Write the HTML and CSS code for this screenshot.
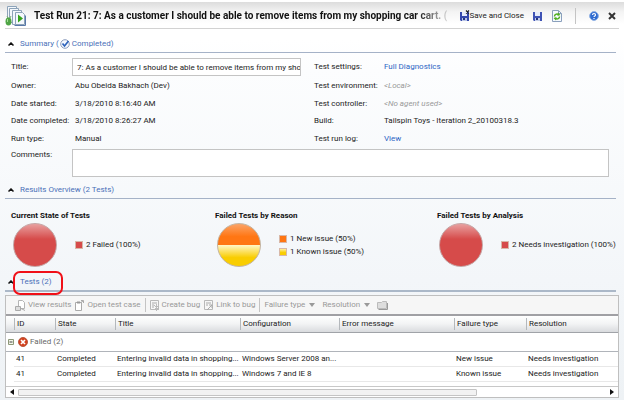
FILE: index.html
```html
<!DOCTYPE html>
<html lang="en">
<head>
<meta charset="utf-8">
<title>Test Run 21</title>
<link rel="stylesheet" href="styles.css">
</head>
<body>
<header class="titlebar">
  <svg class="run-icon" viewBox="0 0 22 22" aria-hidden="true">
    <g fill="#f4f8fc" stroke="#8da3b9"><path d="M2.500 1.500h9v14h-9z"/><path d="M4.500 3.500h9v14h-9z"/><path d="M7.500 5.500h9v14h-9z"/><path d="M10.500 7.500h7l2 2v10h-9z"/></g>
    <path d="M9.500 20.500h11v-10" fill="none" stroke="#5878a8"/>
    <path d="M13 9.500l5 4-5 4z" fill="#35a31c"/>
    <path d="M3 13l-1-2M5 13l1-2" stroke="#7fae7a"/>
    <ellipse cx="3.500" cy="16.500" rx="3" ry="4" fill="#4fa545"/><path d="M2.500 14v3" stroke="#a5dc98"/>
  </svg>
  <h1>Test Run 21: 7: As a customer I should be able to remove items from my shopping car cart. (</h1>
  <div class="actions">
    <button class="save-close" type="button">
      <svg width="11" height="11" viewBox="0 0 11 11" aria-hidden="true"><path d="M1 2h9v9H2l-1-1z" fill="#3448ac"/><path d="M3 2h5v4H3z" fill="#e6ecfa"/><path d="M3 8h5v3H3z" fill="#b9c5e6"/><path d="M4 8h2v2H4z" fill="#25357f"/><path d="M7 .5l3 3M10 .5l-3 3" stroke="#222" stroke-width="1.200"/></svg>Save and Close</button>
    <button type="button" aria-label="Save"><svg width="10" height="10" viewBox="0 0 10 10"><path d="M0 1h9v9H1L0 9z" fill="#3f53b5"/><path d="M2 1h5v4H2z" fill="#e6ecfa"/><path d="M2 7h5v3H2z" fill="#c4cee9"/><path d="M3 7h2v2H3z" fill="#25357f"/></svg></button>
    <button type="button" aria-label="Refresh"><svg width="10" height="12" viewBox="0 0 10 12"><path d="M.5.5h6l3 3v8h-9z" fill="#f6faff" stroke="#8ba0bd"/><path d="M6.500.5v3h3" fill="none" stroke="#8ba0bd"/><path d="M2.500 6.500c0-2 2-3 4-2M7.500 6.500c0 2-2 3-4 2" fill="none" stroke="#4fae20" stroke-width="1.500"/><path d="M6 2.500l2.500 2.500-3 1zM4 10.500L1.500 8l3-1z" fill="#4fae20"/></svg></button>
    <span class="divider"></span>
    <button type="button" aria-label="Help"><svg width="10" height="10" viewBox="0 0 10 10"><circle cx="5" cy="5" r="4.400" fill="#2f6bd0" stroke="#8fb0e4"/><path d="M3.500 4c0-2 3-2 3 0 0 1-1.500 1-1.500 2M5 7v1" fill="none" stroke="#fff" stroke-width="1.200"/></svg></button>
    <button type="button" aria-label="Close"><svg width="8" height="8" viewBox="0 0 8 8"><path d="M1 1l6 6M7 1L1 7" stroke="#333" stroke-width="2"/></svg></button>
  </div>
</header>

<main>
  <section>
    <h2><svg class="chevron" viewBox="0 0 6 4" aria-hidden="true"><path d="M.5 3.500L3 1l2.500 2.500" fill="none" stroke="#111" stroke-width="1.500"/></svg><span>Summary (</span><svg class="check" viewBox="0 0 10 10" aria-hidden="true"><circle cx="5" cy="5" r="4.300" fill="#f4f8ff" stroke="#8c9dbd"/><path d="M2.500 4.500L4.500 7l4-5" fill="none" stroke="#2c62bb" stroke-width="1.700"/></svg><span>Completed)</span></h2>
    <form class="details">
      <label for="title">Title:</label><input id="title" value="7: As a customer I should be able to remove items from my sho">
      <span>Test settings:</span><a href="#settings">Full Diagnostics</a>
      <span>Owner:</span><span class="value">Abu Obeida Bakhach (Dev)</span>
      <span>Test environment:</span><em>&lt;Local&gt;</em>
      <span>Date started:</span><span class="value">3/18/2010 8:16:40 AM</span>
      <span>Test controller:</span><em>&lt;No agent used&gt;</em>
      <span>Date completed:</span><span class="value">3/18/2010 8:26:27 AM</span>
      <span>Build:</span><span>Tailspin Toys - Iteration 2_20100318.3</span>
      <span>Run type:</span><span class="value">Manual</span>
      <span>Test run log:</span><a href="#log">View</a>
      <label class="comments-label" for="comments">Comments:</label><textarea id="comments"></textarea>
    </form>
  </section>

  <section>
    <h2><svg class="chevron" viewBox="0 0 6 4" aria-hidden="true"><path d="M.5 3.500L3 1l2.500 2.500" fill="none" stroke="#111" stroke-width="1.500"/></svg><span>Results Overview (2 Tests)</span></h2>
    <div class="charts">
      <div class="chart">
        <h3>Current State of Tests</h3>
        <div class="plot"><div class="pie red"></div>
          <ul><li><i class="red"></i>2 Failed (100%)</li></ul></div>
      </div>
      <div class="chart">
        <h3>Failed Tests by Reason</h3>
        <div class="plot"><div class="pie split"></div>
          <ul><li><i class="orange"></i>1 New issue (50%)</li><li><i class="yellow"></i>1 Known issue (50%)</li></ul></div>
      </div>
      <div class="chart">
        <h3>Failed Tests by Analysis</h3>
        <div class="plot"><div class="pie red"></div>
          <ul><li><i class="red"></i>2 Needs investigation (100%)</li></ul></div>
      </div>
    </div>
  </section>

  <section>
    <h2 class="tests"><svg class="chevron" viewBox="0 0 6 4" aria-hidden="true"><path d="M.5 3.500L3 1l2.500 2.500" fill="none" stroke="#111" stroke-width="1.500"/></svg><span>Tests (2)</span></h2>
    <div class="panel">
      <div class="toolbar">
        <button type="button"><svg width="11" height="11" viewBox="0 0 11 11" aria-hidden="true"><path d="M3.500.5h4l2 2v6h-6z" fill="#fff" stroke="#b4b4b4"/><path d="M.5 6.500h5v4h-5zM5 8l5 2.500" fill="#ddd" stroke="#aaa"/></svg>View results</button>
        <button type="button"><svg width="10" height="11" viewBox="0 0 10 11" aria-hidden="true"><path d="M.5 2.500h6v8h-6z" fill="#fff" stroke="#aaa"/><path d="M2 2.500h3" stroke="#999" stroke-width="2"/><path d="M5 3l3-2M6 .5h2.500V3" fill="none" stroke="#aaa"/></svg>Open test case</button>
        <span class="divider"></span>
        <button type="button"><svg width="10" height="11" viewBox="0 0 10 11" aria-hidden="true"><path d="M.5.500h8v9h-8z" fill="#f6f6f6" stroke="#b8b8b8"/><path d="M2 3h5M2 5h2M2 7h2" stroke="#aaa"/><path d="M4 5l5 5M9 5l-5 5M6.500 4v7" stroke="#bbb"/></svg>Create bug</button>
        <button type="button"><svg width="10" height="11" viewBox="0 0 10 11" aria-hidden="true"><path d="M.5.500h8v9h-8z" fill="#f6f6f6" stroke="#b8b8b8"/><path d="M2 3h5M2 5h2" stroke="#aaa"/><path d="M3 10l5-5M5 5h3v3" fill="none" stroke="#aaa"/></svg>Link to bug</button>
        <span class="divider"></span>
        <button class="menu" type="button">Failure type<i class="caret"></i></button>
        <button class="menu" type="button">Resolution<i class="caret"></i></button>
        <button type="button" aria-label="Columns"><svg width="11" height="9" viewBox="0 0 11 9"><path d="M.5 1.500h4l1-1h4v7h-9z" fill="#ddd" stroke="#bbb"/><path d="M10.500 2v6.500h-9" fill="none" stroke="#999"/></svg></button>
      </div>
      <table>
        <colgroup><col class="c-exp"><col class="c-id"><col class="c-state"><col class="c-title"><col class="c-config"><col class="c-error"><col class="c-failure"><col></colgroup>
        <thead><tr><th></th><th>ID</th><th>State</th><th>Title</th><th>Configuration</th><th>Error message</th><th>Failure type</th><th>Resolution</th></tr></thead>
        <tbody>
          <tr class="group"><td colspan="8"><div><svg width="6" height="6" viewBox="0 0 6 6" aria-hidden="true"><path d="M.5.5h5v5h-5z" fill="#f3f6e9" stroke="#8d9878"/><path d="M1.500 3h3" stroke="#444"/></svg><svg width="10" height="10" viewBox="0 0 10 10" aria-hidden="true"><circle cx="5" cy="5" r="4.500" fill="#d3401d" stroke="#b95a40"/><path d="M3 3l4 4M7 3L3 7" stroke="#fff" stroke-width="1.700"/></svg>Failed (2)</div></td></tr>
          <tr><td></td><td>41</td><td>Completed</td><td>Entering invalid data in shopping...</td><td>Windows Server 2008 an...</td><td></td><td>New issue</td><td>Needs investigation</td></tr>
          <tr><td></td><td>41</td><td>Completed</td><td>Entering invalid data in shopping...</td><td>Windows 7 and IE 8</td><td></td><td>Known issue</td><td>Needs investigation</td></tr>
        </tbody>
      </table>
      <div class="scrollbar"><i class="left"></i><div class="track"><div class="thumb"></div></div><i class="right"></i></div>
    </div>
  </section>
</main>
</body>
</html>
```
FILE: styles.css
```css
*, *::before, *::after { box-sizing: border-box; }
body {
  margin: 0;
  padding: 2px 5px 2px;
  min-height: 100vh;
  font: 8px/12px Roboto, "Noto Sans", sans-serif;
  color: #222;
  background: linear-gradient(#fff 40px, #fcfdfe 70px, #f3f6f9 280px, #eef2f5);
}
h1, h2, h3, ul { margin: 0; padding: 0; font-size: inherit; }
svg { flex: none; }
button {
  display: flex;
  align-items: center;
  padding: 0;
  border: 0;
  background: none;
  font: inherit;
  color: inherit;
}
a { color: #2c66c4; text-decoration: none; }
em { color: #999; }
.divider { width: 1px; height: 14px; background: #c4c4c4; }

.titlebar {
  display: flex;
  align-items: center;
  height: 27px;
  margin: 0 -5px;
  padding: 0 8px 0 5px;
  background: linear-gradient(#dcdcdc, #f4f4f4 10px, #fff 22px);
}
.titlebar::after { content: ""; position: absolute; left: 5px; right: 5px; top: 28px; height: 1px; background: #d2d2d2; }
.run-icon { width: 22px; height: 22px; margin-right: 7px; }
h1 {
  flex: 1;
  min-width: 0;
  overflow: hidden;
  white-space: nowrap;
  font-size: 10px;
  line-height: 16px;
  color: #111;
  mask-image: linear-gradient(90deg, #000 calc(100% - 36px), transparent);
}
.actions { display: flex; align-items: center; gap: 9px; margin-left: 6px; }
.actions .divider { height: 16px; margin: 0 4px; }

h2 {
  position: relative;
  display: flex;
  align-items: center;
  height: 17px;
  margin-right: 3px;
  border-bottom: 1px solid #a5b2c7;
  font-weight: 400;
  color: #4a70b8;
}
.chevron { width: 6px; height: 4px; margin: 0 6px 0 3px; }
.check { width: 10px; height: 10px; margin: 0 2px 0 1px; }
main > section:first-child h2 { margin-top: 7px; }

.details {
  display: grid;
  grid-template-columns: 61px minmax(0, 242fr) 70px minmax(0, 232fr);
  grid-template-rows: 20px 18px 17px 18px 18px 30px;
  align-items: center;
  padding: 4px 3px 4px 6px;
  white-space: nowrap;
}
.value { padding-left: 3px; }
.details input {
  width: 229px;
  height: 18px;
  padding: 0 0 0 4px;
  border: 1px solid #c4c4c4;
  background: #fff;
  font: inherit;
  color: inherit;
}
.details textarea {
  grid-column: 2 / 5;
  height: 28px;
  margin-right: 7px;
  border: 1px solid #c4c4c4;
  background: #fff;
  resize: none;
  font: inherit;
}
.comments-label { align-self: start; padding-top: 1px; }

.charts { display: grid; grid-template-columns: minmax(0, 204fr) minmax(0, 222fr) minmax(0, 179fr); height: 75px; padding: 11px 3px 0 6px; white-space: nowrap; }
.chart h3 { color: #111; }
.plot { display: flex; align-items: center; gap: 18px; margin: 1px 0 0 2px; }
.pie { flex: none; width: 44px; height: 44px; border: 1px solid #c5a5a5; border-radius: 50%; }
.pie.red { background: linear-gradient(#e8a0a0, #d64b4a 36%); }
.split { border-color: #c4b4a0; background: linear-gradient(#fba468, #ff7613 30%, #ff7613 50%, #fff6c8 50%, #f9cd00 80%); }
ul { list-style: none; }
li { display: flex; align-items: center; height: 13px; gap: 3px; }
li i { width: 8px; height: 8px; border: 1px solid #d8b8a8; }
li .red { background: #d64b4a; }
.orange { background: #ff7613; }
.yellow { background: linear-gradient(#fff0a0, #f9cd00 60%); }

h2.tests { height: 18px; border-bottom: 2px solid #abb8c8; }
h2.tests::after {
  content: "";
  position: absolute;
  left: 8px;
  top: -3px;
  width: 50px;
  height: 24px;
  border: 2px solid #f01018;
  border-radius: 7px;
}
.panel { margin-top: 3px; border: 1px solid #bfbfbf; background: #fff; }
.toolbar {
  display: flex;
  align-items: center;
  height: 18px;
  gap: 4px;
  padding-left: 9px;
  background: #f6f6f6;
  color: #999;
  white-space: nowrap;
}
.toolbar button { gap: 2px; }
.toolbar .menu { gap: 4px; padding-right: 3px; }
.caret { border: 3px solid transparent; border-top: 4px solid #999; border-bottom: 0; }

table { width: 100%; table-layout: fixed; border-collapse: separate; border-spacing: 0; }
.c-exp { width: 8px; }
.c-id { width: 41px; }
.c-state { width: 60px; }
.c-title { width: 125px; }
.c-config { width: 99px; }
.c-error { width: 115px; }
.c-failure { width: 72px; }
th {
  height: 19px;
  padding: 0 0 0 3px;
  border-top: 2px solid #a0a0a4;
  border-bottom: 1px solid #a0a3a8;
  background: linear-gradient(90deg, #b4b8bc, #b4b8bc) 0 2px / 1px 12px no-repeat, linear-gradient(#fff, #f2f3f4 50%, #d9dbde);
  font-weight: 400;
  text-align: left;
  white-space: nowrap;
}
th:first-child { background: linear-gradient(#fff, #f2f3f4 50%, #d9dbde); }
td { height: 15px; padding: 0 0 0 2px; border-bottom: 1px solid #e8e8e8; white-space: nowrap; overflow: hidden; }
td:first-child { border-bottom-color: transparent; }
.group td:first-child { height: 19px; border-bottom-color: #b0b4ba; color: #666; }
.group div { display: flex; align-items: center; gap: 2px; }
.group div svg:first-child { margin-right: 2px; }
.scrollbar { display: flex; align-items: center; height: 11px; margin-top: 4px; padding: 0 4px; gap: 4px; border-top: 1px solid #c8c8c8; }
.track { flex: 1; }
.thumb { width: 78%; height: 7px; border: 1px solid #c4c4c4; border-radius: 1px; background: #f2f2f2; }
.left, .right { border: 3px solid transparent; }
.left { border-right: 4px solid #111; border-left: 0; }
.right { border-left: 4px solid #111; border-right: 0; }
```
